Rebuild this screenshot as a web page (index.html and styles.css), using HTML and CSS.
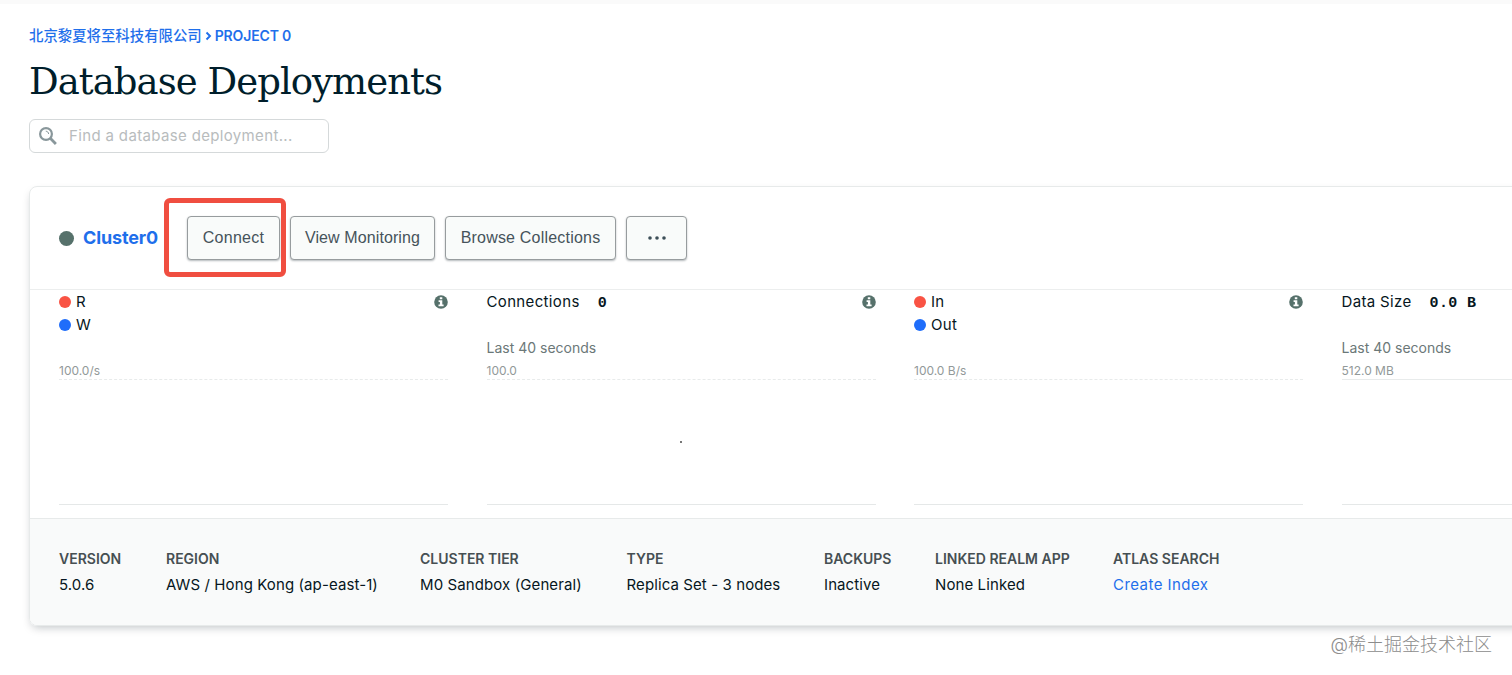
FILE: index.html
```html
<!DOCTYPE html>
<html lang="zh-CN">
<head>
    <meta charset="UTF-8">
    <meta name="viewport" content="width=device-width, initial-scale=1.0">
    <title>Database Deployments</title>
    <link rel="stylesheet" href="styles.css">
</head>
<body>
    <svg class="symbols" width="0" height="0">
        <symbol id="info" viewBox="0 0 14 14">
            <circle cx="7" cy="7" r="6.8" fill="#56716b"/>
            <path d="M5.8 2.2h2.5v2H5.8zM4.6 5.3h3.7v4.3h1.3v1.7H4.5V9.6h1.4V7H4.6z" fill="#fff"/>
        </symbol>
    </svg>

    <header class="page-header">
        <nav class="breadcrumb">
            <a href="#" class="org">北京黎夏将至科技有限公司</a>
            <svg class="chevron" width="7" height="10" viewBox="0 0 7 10"><path d="M1.5 1.5L5 5 1.5 8.5" fill="none" stroke="#1f6feb" stroke-width="1.9"/></svg>
            <a href="#" class="project">PROJECT 0</a>
        </nav>
        <h1>Database Deployments</h1>
        <div class="search">
            <svg width="20" height="20" viewBox="0 0 20 20" fill="none" stroke="#89979b">
                <circle cx="8" cy="8" r="5.9" stroke-width="2.2"/>
                <path d="M12.3 12.3l5.6 5.6" stroke-width="2.8"/>
                <path d="M7.8 5.2c1.600 0 2.800 1.200 2.800 2.800" stroke-width="1"/>
            </svg>
            <input type="text" placeholder="Find a database deployment...">
        </div>
    </header>

    <main class="card">
        <div class="card-header">
            <span class="status"></span>
            <a href="#" class="cluster-name">Cluster0</a>
            <div class="actions">
                <button class="btn connect">Connect</button>
                <button class="btn monitoring">View Monitoring</button>
                <button class="btn browse">Browse Collections</button>
                <button class="btn more">
                    <svg width="18" height="4" viewBox="0 0 18 4" fill="#3d4f58"><circle cx="2" cy="2" r="1.8"/><circle cx="9" cy="2" r="1.8"/><circle cx="16" cy="2" r="1.8"/></svg>
                </button>
                <span class="highlight"></span>
            </div>
        </div>

        <div class="metrics">
            <section class="metric">
                <div class="metric-top">
                    <ul class="legend">
                        <li><i class="dot red"></i>R</li>
                        <li><i class="dot blue"></i>W</li>
                    </ul>
                    <svg class="info"><use href="#info"/></svg>
                </div>
                <div class="scale">100.0/s</div>
                <div class="chart"></div>
            </section>
            <section class="metric">
                <div class="metric-top">
                    <div>
                        <div class="metric-name"><span>Connections</span><b>0</b></div>
                        <div class="period">Last 40 seconds</div>
                    </div>
                    <svg class="info"><use href="#info"/></svg>
                </div>
                <div class="scale">100.0</div>
                <div class="chart"><span class="tick"></span></div>
            </section>
            <section class="metric">
                <div class="metric-top">
                    <ul class="legend">
                        <li><i class="dot red"></i>In</li>
                        <li><i class="dot blue"></i>Out</li>
                    </ul>
                    <svg class="info"><use href="#info"/></svg>
                </div>
                <div class="scale">100.0 B/s</div>
                <div class="chart"></div>
            </section>
            <section class="metric">
                <div class="metric-top">
                    <div>
                        <div class="metric-name"><span>Data Size</span><b>0.0 B</b></div>
                        <div class="period">Last 40 seconds</div>
                    </div>
                </div>
                <div class="scale">512.0 MB</div>
                <div class="chart solid"></div>
            </section>
        </div>

        <dl class="details">
            <div><dt>VERSION</dt><dd>5.0.6</dd></div>
            <div><dt>REGION</dt><dd>AWS / Hong Kong (ap-east-1)</dd></div>
            <div><dt>CLUSTER TIER</dt><dd>M0 Sandbox (General)</dd></div>
            <div><dt>TYPE</dt><dd>Replica Set - 3 nodes</dd></div>
            <div><dt>BACKUPS</dt><dd>Inactive</dd></div>
            <div><dt>LINKED REALM APP</dt><dd>None Linked</dd></div>
            <div><dt>ATLAS SEARCH</dt><dd><a href="#">Create Index</a></dd></div>
        </dl>
    </main>

    <footer class="watermark">@稀土掘金技术社区</footer>
</body>
</html>
```

FILE: styles.css
```css
* {
    box-sizing: border-box;
}
body {
    margin: 0;
    height: 675px;
    overflow: hidden;
    border-top: 4px solid #fafafa;
    background: #fff;
    color: #061621;
    font-family: Inter, "Noto Sans CJK SC", sans-serif;
    font-size: 15px;
}
a {
    color: #1f6feb;
    text-decoration: none;
}
.symbols {
    position: absolute;
}
.page-header {
    padding: 21px 29px 0;
}
.breadcrumb {
    display: flex;
    align-items: center;
    height: 20px;
    font-size: 14px;
    font-weight: 600;
}
.org {
    padding-bottom: 1px;
    font-family: "Noto Sans CJK SC", sans-serif;
    font-size: 14.4px;
    font-weight: 500;
}
.chevron {
    margin: 1px 3px 0 3px;
}
.project {
    letter-spacing: -0.15px;
}
h1 {
    margin: 12px 0 0;
    height: 50px;
    line-height: 50px;
    color: #001e2b;
    font-family: "DejaVu Serif", serif;
    font-size: 37px;
    font-weight: 400;
    letter-spacing: -0.95px;
    white-space: nowrap;
}
.search {
    display: flex;
    align-items: center;
    width: 300px;
    height: 34px;
    margin-top: 12px;
    padding-left: 8px;
    border: 1px solid #d5d9da;
    border-radius: 6px;
}
.search input {
    flex: 1;
    min-width: 0;
    padding: 0 0 2px 11px;
    border: 0;
    outline: 0;
    background: none;
    font: 15px Inter, sans-serif;
    letter-spacing: 0.35px;
}
.search input::placeholder {
    color: #b8bcbd;
}
.card {
    width: 1730px;
    height: 440px;
    margin: 33px 0 0 29px;
    border: 1px solid #e7eaea;
    border-radius: 8px;
    box-shadow: 0 4px 10px -3px rgba(6, 22, 33, 0.28);
    overflow: hidden;
}
.card-header {
    display: flex;
    align-items: center;
    height: 103px;
    padding-left: 29px;
    border-bottom: 1px solid #eceeee;
}
.status {
    width: 15px;
    height: 15px;
    border-radius: 50%;
    background: #56716b;
}
.cluster-name {
    width: 104px;
    margin-left: 9px;
    padding-bottom: 2px;
    font-size: 18px;
    font-weight: 700;
    letter-spacing: -0.15px;
}
.actions {
    position: relative;
    display: flex;
    gap: 10px;
}
.btn {
    display: flex;
    align-items: center;
    justify-content: center;
    height: 44px;
    padding: 0;
    border: 1px solid #979c9e;
    border-radius: 4px;
    background: #f9fbfa;
    box-shadow: 0 1px 2px rgba(6, 22, 33, 0.3);
    color: #46535a;
    font: 16px "Liberation Sans", Arial, sans-serif;
    letter-spacing: 0.1px;
    white-space: nowrap;
}
.connect {
    width: 93px;
    letter-spacing: 0.3px;
}
.monitoring {
    width: 145px;
}
.browse {
    width: 171px;
    letter-spacing: 0.2px;
}
.more {
    width: 61px;
}
/* red frame round the connect button */
.highlight {
    position: absolute;
    top: -18px;
    left: -23px;
    width: 122px;
    height: 79px;
    border: 5px solid #f04e40;
    border-radius: 6px;
}
.metrics {
    display: grid;
    grid-template-columns: repeat(4, 389px);
    column-gap: 38.5px;
    height: 228px;
    padding-left: 29px;
}
.metric-top {
    display: flex;
    justify-content: space-between;
    height: 73px;
    padding-top: 1px;
    line-height: 22px;
}
.legend {
    margin: 0;
    padding: 0;
    list-style: none;
}
.legend li {
    display: flex;
    align-items: center;
    height: 22.5px;
    letter-spacing: 0.3px;
}
.dot {
    width: 12px;
    height: 12px;
    margin-right: 5px;
    border-radius: 50%;
}
.red {
    background: #f95344;
}
.blue {
    background: #1f6dfa;
}
.info {
    width: 14px;
    height: 14px;
    margin: 4px 0 0;
}
.metric-name {
    letter-spacing: 0.35px;
}
.metric-name b {
    margin-left: 18px;
    font: bold 15px "Liberation Mono", monospace;
}
.period {
    margin-top: 24px;
    color: #6b7878;
    font-size: 14px;
}
.scale {
    height: 16px;
    line-height: 16px;
    color: #929999;
    font-size: 12px;
}
.chart {
    position: relative;
    height: 126px;
    border-top: 1px dashed #e8ebeb;
    border-bottom: 1px solid #e5e8e8;
}
.chart.solid {
    border-top-style: solid;
}
.tick {
    position: absolute;
    top: 61px;
    left: 193px;
    width: 2px;
    height: 2px;
    background: #777;
}
.details {
    display: grid;
    grid-template-columns: 107px 254px 206.5px 197.5px 111px 178px auto;
    height: 108px;
    margin: 0;
    padding: 28px 0 0 29px;
    border-top: 1px solid #e7eaea;
    background: #f9fafa;
}
dt {
    height: 22px;
    line-height: 23px;
    color: #464f52;
    font-size: 14px;
    font-weight: 600;
    white-space: nowrap;
}
dd {
    height: 22px;
    margin: 4px 0 0;
    line-height: 23px;
    letter-spacing: 0.1px;
    white-space: nowrap;
}
dd a {
    letter-spacing: 0.45px;
}
.watermark {
    margin: 5px 20px 0 0;
    color: #8c8c8c;
    font-size: 18px;
    font-weight: 300;
    line-height: 28px;
    text-align: right;
}
```
